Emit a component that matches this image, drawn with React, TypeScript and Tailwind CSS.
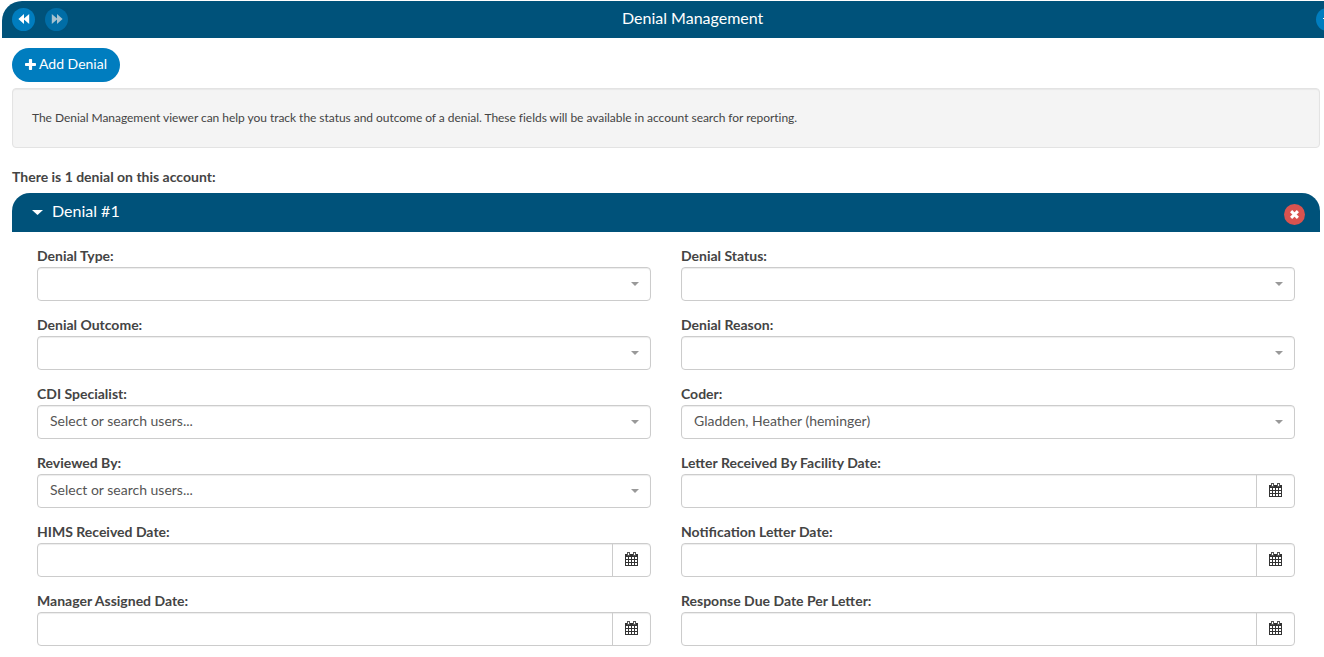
import React from "react";

function CalendarIcon() {
  return (
    <svg width="13" height="14" viewBox="0 0 13 14" className="block" shapeRendering="crispEdges">
      <path
        fill="#333333"
        fillRule="evenodd"
        d="M0 2H13V14H0ZM1 5H3V7H1ZM4 5H6V7H4ZM7 5H9V7H7ZM10 5H12V7H10ZM1 8H3V10H1ZM4 8H6V10H4ZM7 8H9V10H7ZM10 8H12V10H10ZM1 11H3V13H1ZM4 11H6V13H4ZM7 11H9V13H7ZM10 11H12V13H10Z"
      />
      <path fill="#555" d="M2 0H5V4H2ZM8 0H11V4H8Z" />
      <path fill="#fff" d="M3 1H4V3H3ZM9 1H10V3H9Z" />
    </svg>
  );
}

function DoubleArrow({ flip = false }: { flip?: boolean }) {
  return (
    <svg width="12" height="10" viewBox="0 0 12 10" fill="#fff" className={flip ? "rotate-180" : ""}>
      <path d="M6 0V4.6L11.2 0V10L6 5.4V10L0.4 5Z" />
    </svg>
  );
}

type Field = { label: string; kind: "select" | "date"; value?: string };

const fields: Field[] = [
  { label: "Denial Type:", kind: "select" },
  { label: "Denial Status:", kind: "select" },
  { label: "Denial Outcome:", kind: "select" },
  { label: "Denial Reason:", kind: "select" },
  { label: "CDI Specialist:", kind: "select", value: "Select or search users..." },
  { label: "Coder:", kind: "select", value: "Gladden, Heather (heminger)" },
  { label: "Reviewed By:", kind: "select", value: "Select or search users..." },
  { label: "Letter Received By Facility Date:", kind: "date" },
  { label: "HIMS Received Date:", kind: "date" },
  { label: "Notification Letter Date:", kind: "date" },
  { label: "Manager Assigned Date:", kind: "date" },
  { label: "Response Due Date Per Letter:", kind: "date" },
];

function FieldRow({ label, kind, value }: Field) {
  return (
    <div className="flex flex-col">
      <div className="h-[21px] text-[14px] leading-5 font-bold text-[#444]">{label}</div>
      <div className="flex h-[34px] rounded-[4px] border border-[#ccc] bg-white shadow-[inset_0_1px_1px_rgba(0,0,0,0.075)]">
        {kind === "select" ? (
          <div className="flex flex-1 items-center justify-between pr-[11px] pl-3">
            <span className="-mt-[2px] text-[14px] leading-5 text-[#555]">{value}</span>
            <svg width="8" height="4" viewBox="0 0 8 4" fill="#999">
              <path d="M0 0H8L4 4Z" />
            </svg>
          </div>
        ) : (
          <>
            <div className="flex-1" />
            <button className="flex w-[38px] items-start border-l border-[#ccc] pt-2 pl-3">
              <CalendarIcon />
            </button>
          </>
        )}
      </div>
    </div>
  );
}

export default function App() {
  return (
    <div className="h-[657px] w-[1324px] overflow-hidden bg-white pt-px font-['Lato',sans-serif] text-[#444]">
      <header className="relative ml-[2px] flex h-[37px] items-center overflow-hidden rounded-tl-[20px] bg-[#00527a] pb-px pl-[10px]">
        <button className="flex size-[23px] items-center justify-center rounded-full bg-[#007dbf]">
          <DoubleArrow />
        </button>
        <button className="ml-[10px] flex size-[23px] items-center justify-center rounded-full bg-[#007dbf] opacity-65">
          <DoubleArrow flip />
        </button>
        <h1 className="ml-[554px] pb-[2px] text-[16px] leading-6 text-white">Denial Management</h1>
        <div className="absolute top-[7px] left-[1314px] flex size-[23px] items-start rounded-full bg-[#007dbf] pt-[10px] pl-[7px]">
          <div className="h-px w-[9px] bg-white" />
        </div>
      </header>
      <main className="pr-1 pl-3">
        <button className="mt-[10px] flex h-[34px] w-[108px] items-center rounded-full bg-[#007dbf] pb-[2px] pl-[13px] text-[14px] text-white">
          <svg width="11" height="11" viewBox="0 0 11 11" fill="#fff" className="mr-[3px]">
            <path d="M4.7 0H6.3Q7.1 0 7.1 .8V3.9H10.2Q11 3.9 11 4.7V6.3Q11 7.1 10.2 7.1H7.1V10.2Q7.1 11 6.3 11H4.7Q3.9 11 3.9 10.2V7.1H.8Q0 7.1 0 6.3V4.7Q0 3.9 .8 3.9H3.9V.8Q3.9 0 4.7 0Z" />
          </svg>
          <span className="pb-px leading-5">Add Denial</span>
        </button>
        <div className="mt-[6px] flex h-[60px] items-center rounded-[4px] border border-[#e3e3e3] bg-[#f4f4f4] pl-[19px] text-[12px] tracking-[-0.038px] shadow-[inset_0_1px_1px_rgba(0,0,0,0.05)]">
          The Denial Management viewer can help you track the status and outcome of a denial. These fields will be available in account search for reporting.
        </div>
        <p className="mt-[19px] h-[26px] text-[14px] leading-5 font-bold">There is 1 denial on this account:</p>
        <section>
          <div className="flex h-[39px] items-center rounded-t-[18px] bg-[#00527a] pr-[15px] pl-5 text-white">
            <svg width="11" height="5" viewBox="0 0 11 5" fill="#fff" className="-mt-px">
              <path d="M0 0H11L5.5 5Z" />
            </svg>
            <h2 className="ml-[9px] pb-1 text-[16px] leading-6">Denial #1</h2>
            <button className="mt-[3px] ml-auto flex size-[21px] items-center justify-center rounded-full bg-[#d9534f]">
              <svg width="9" height="9" viewBox="0 0 9 9" stroke="#fff" strokeWidth="3">
                <path d="M1.1 1.1L7.9 7.9M7.9 1.1L1.1 7.9" />
              </svg>
            </button>
          </div>
          <div className="grid grid-cols-2 gap-x-[30px] gap-y-[14px] px-[25px] pt-[14px]">
            {fields.map((f) => (
              <FieldRow key={f.label} {...f} />
            ))}
          </div>
        </section>
      </main>
    </div>
  );
}
